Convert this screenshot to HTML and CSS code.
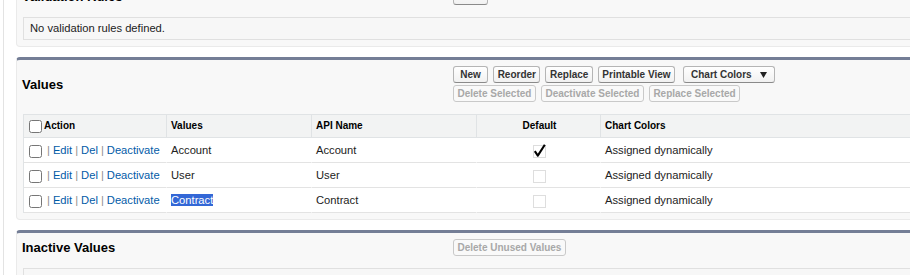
FILE: index.html
```html
<!DOCTYPE html>
<html lang="en">
<head>
  <meta charset="UTF-8" />
  <title>Picklist Values</title>
  <link rel="stylesheet" href="styles.css">
</head>
<body>

<div class="page">

  <!-- Validation rules -->
  <div class="block">
    <div class="block-header">
      <h2 class="block-title">Validation Rules</h2>
      <div class="block-buttons">
        <div class="btn-row">
          <input type="button" class="btn" value=" New ">
        </div>
      </div>
    </div>
    <div class="block-body">
      <div class="empty-box">No validation rules defined.</div>
    </div>
  </div>

  <!-- Active values -->
  <div class="block">
    <div class="block-header">
      <h2 class="block-title">Values</h2>
      <div class="block-buttons">
        <div class="btn-row">
          <input type="button" class="btn" value=" New ">
          <input type="button" class="btn" value="Reorder">
          <input type="button" class="btn" value="Replace">
          <input type="button" class="btn" value="Printable View">
          <button class="btn btn-menu">Chart Colors
            <svg width="7" height="6" viewBox="0 0 7 6"><polygon points="0,0 7,0 3.5,6" fill="#222"/></svg>
          </button>
        </div>
        <div class="btn-row">
          <input type="button" class="btn" value="Delete Selected" disabled>
          <input type="button" class="btn" value="Deactivate Selected" disabled>
          <input type="button" class="btn" value="Replace Selected" disabled>
        </div>
      </div>
    </div>
    <div class="block-body">
      <table class="list">
        <colgroup>
          <col class="col-action">
          <col class="col-values">
          <col class="col-api">
          <col class="col-default">
          <col class="col-colors">
        </colgroup>
        <thead>
          <tr>
            <th><input type="checkbox" class="chk">Action</th>
            <th>Values</th>
            <th>API Name</th>
            <th class="center">Default</th>
            <th>Chart Colors</th>
          </tr>
        </thead>
        <tbody>
          <tr>
            <td><input type="checkbox" class="chk"><span class="sep">|</span><a href="#">Edit</a><span class="sep">|</span><a href="#">Del</a><span class="sep">|</span><a href="#">Deactivate</a></td>
            <td>Account</td>
            <td>Account</td>
            <td class="center">
              <svg class="img-check" width="13" height="14" viewBox="0 0 13 14">
                <rect x="0.5" y="1.5" width="12" height="12" fill="none" stroke="#bbb" stroke-dasharray="1 1"/>
                <path d="M1.8 7.2 L4.8 11.6 L11.8 0.8" fill="none" stroke="#000" stroke-width="2.1" stroke-linejoin="round"/>
              </svg>
            </td>
            <td>Assigned dynamically</td>
          </tr>
          <tr>
            <td><input type="checkbox" class="chk"><span class="sep">|</span><a href="#">Edit</a><span class="sep">|</span><a href="#">Del</a><span class="sep">|</span><a href="#">Deactivate</a></td>
            <td>User</td>
            <td>User</td>
            <td class="center">
              <svg class="img-check" width="13" height="14" viewBox="0 0 13 14">
                <rect x="0.5" y="1.5" width="12" height="12" fill="none" stroke="#bdbdbd" stroke-dasharray="1 1"/>
              </svg>
            </td>
            <td>Assigned dynamically</td>
          </tr>
          <tr>
            <td><input type="checkbox" class="chk"><span class="sep">|</span><a href="#">Edit</a><span class="sep">|</span><a href="#">Del</a><span class="sep">|</span><a href="#">Deactivate</a></td>
            <td><span class="selected">Contract</span></td>
            <td>Contract</td>
            <td class="center">
              <svg class="img-check" width="13" height="14" viewBox="0 0 13 14">
                <rect x="0.5" y="1.5" width="12" height="12" fill="none" stroke="#bdbdbd" stroke-dasharray="1 1"/>
              </svg>
            </td>
            <td>Assigned dynamically</td>
          </tr>
        </tbody>
      </table>
    </div>
  </div>

  <!-- Inactive values -->
  <div class="block">
    <div class="block-header">
      <h2 class="block-title">Inactive Values</h2>
      <div class="block-buttons">
        <div class="btn-row">
          <input type="button" class="btn" value="Delete Unused Values" disabled>
        </div>
      </div>
    </div>
    <div class="block-body">
      <div class="empty-box">&nbsp;</div>
    </div>
  </div>

</div>

</body>
</html>
```

FILE: styles.css
```css
html, body {
  margin: 0;
  padding: 0;
  background: #fff;
  color: #222;
  font-family: "Liberation Sans", Arial, sans-serif;
  font-size: 11.2px;
  overflow: hidden;
}

.page {
  margin: -21px 0 0 3px;
  padding-left: 12px;
  border-left: 1px solid #e3e3e3;
  min-height: 340px;
}

.block {
  width: 1000px;
  background: #f8f8f8;
  border: 1px solid #eaeaea;
  border-top: 3px solid #747e96;
  border-radius: 4px;
  margin-bottom: 10px;
}

.block-header {
  display: flex;
  align-items: center;
  padding: 6px 0;
}

.block-title {
  box-sizing: border-box;
  width: 436px;
  margin: 0;
  padding-left: 5px;
  font-size: 13px;
  font-weight: bold;
  color: #000;
}

.btn-row {
  display: flex;
  gap: 5px;
}

.btn-row + .btn-row {
  margin-top: 2px;
}

.btn {
  box-sizing: border-box;
  height: 17px;
  margin: 0;
  padding: 2px 3.5px;
  font-family: "Liberation Sans", Arial, sans-serif;
  font-size: 10px;
  font-weight: bold;
  line-height: 11px;
  color: #333;
  background: linear-gradient(#fff, #f1f1f1);
  border: 1px solid #b5b5b5;
  border-bottom-color: #8a8a8a;
  border-radius: 3px;
}

.btn:disabled {
  color: #a8a8a8;
  border-color: #c9c9c9;
  background: #f9f9f9;
}

.btn-menu {
  display: flex;
  align-items: center;
  gap: 8px;
  margin-left: 3px;
  padding: 0 7px;
}

.block-body {
  padding: 6px;
}

.empty-box {
  height: 21px;
  line-height: 21px;
  padding: 0 6px;
  border: 1px solid #e0e0e0;
  background: #f7f7f7;
  color: #222;
}

.list {
  table-layout: fixed;
  width: 990px;
  border-spacing: 0;
  border-top: 1px solid #e0e3e5;
  border-left: 1px solid #e0e3e5;
  background: #fff;
}

.col-action { width: 142px; }
.col-values { width: 145px; }
.col-api { width: 165px; }
.col-default { width: 124px; }

.list th {
  height: 22px;
  padding: 0 2px 0 4px;
  line-height: 22px;
  text-align: left;
  font-size: 10px;
  font-weight: bold;
  color: #000;
  background: #f2f3f3;
  border-bottom: 1px solid #e0e3e5;
  white-space: nowrap;
}

.list th + th {
  border-left: 1px solid #e0e3e5;
}

.list td {
  height: 24px;
  padding: 0 2px 0 4px;
  line-height: 24px;
  border-bottom: 1px solid #e3e3e3;
  white-space: nowrap;
}

.list td + td {
  border-left: 1px solid #fff;
}

.list th:first-child,
.list td:first-child {
  padding-left: 2px;
}

.list .center {
  text-align: center;
}

.chk {
  width: 13px;
  height: 13px;
  margin: 0 2px 0 3px;
  vertical-align: middle;
}

.sep {
  color: #8f8f8f;
  margin: 0 3px 0 3px;
}

.list a {
  color: #015ba7;
  text-decoration: none;
}

.img-check {
  vertical-align: middle;
}

.selected {
  background: #3367d6;
  color: #fff;
}
```
